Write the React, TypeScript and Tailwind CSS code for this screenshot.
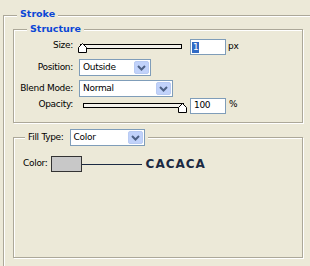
import React from "react";

const Chevron = () => (
  <svg width="9" height="6" viewBox="0 0 9 6">
    <polyline points="1,1 4.5,4.5 8,1" fill="none" stroke="#4D6185" strokeWidth="2" />
  </svg>
);

const Combo = ({ w, text }: { w: string; text: string }) => (
  <div className={`${w} h-[17px] border border-[#7F9DB9] bg-white flex items-center`}>
    <span className="pl-[3px] leading-none">{text}</span>
    <div className="ml-auto mr-[1px] h-[13px] w-[15px] rounded-[2px] border border-[#B9CBF3] bg-[#C1D2FA] flex items-center justify-center">
      <Chevron />
    </div>
  </div>
);

const Thumb = () => (
  <svg width="10" height="10" viewBox="0 0 10 10">
    <path d="M4.5 0.5 L8.5 4.5 L8.5 9.5 L0.5 9.5 L0.5 4.5 Z" fill="#fff" stroke="#000" strokeWidth="1" />
  </svg>
);

export default function App() {
  return (
    <div className="w-[310px] h-[266px] overflow-hidden bg-[#ECE9D8] font-['DejaVu_Sans',sans-serif] text-[9px] tracking-[-0.3px] text-black">
      <div className="pt-[15px] pl-[3px]">
        {/* Outer Stroke group */}
        <div className="relative w-[330px] h-[300px] border border-[#ACA899] shadow-[1px_1px_0_#fff,inset_1px_1px_0_#fff]">
          <div className="absolute left-[13px] top-[-8px] px-[3px] bg-[#ECE9D8] text-[9.5px] leading-[12px] font-bold tracking-normal text-[#0B46D6]">
            Stroke
          </div>

          {/* Structure group */}
          <div className="relative ml-[9px] mt-[13px] w-[290px] h-[94px] border border-[#ACA899] shadow-[1px_1px_0_#fff,inset_1px_1px_0_#fff]">
            <div className="absolute left-[13px] top-[-7px] px-[3px] bg-[#ECE9D8] text-[9.5px] leading-[12px] font-bold tracking-normal text-[#0B46D6]">
              Structure
            </div>

            {/* Size row */}
            <div className="flex items-center h-[16px] mt-[9px]">
              <div className="w-[59px] text-right -mt-[2px]">Size:</div>
              <div className="relative ml-[6px] w-[104px] h-[16px]">
                <div className="ml-[1px] mt-[5px] w-[102px] h-[5px] border border-black bg-[#F3F2EC]" />
                <div className="absolute left-[-1px] top-[4px]">
                  <Thumb />
                </div>
              </div>
              <div className="ml-[7px] w-[36px] h-[16px] border border-[#7F9DB9] bg-white flex items-center pl-[1px]">
                <span className="bg-[#316AC5] text-white px-[1px] leading-[11px]">1</span>
              </div>
              <div className="ml-[2px]">px</div>
            </div>

            {/* Position row */}
            <div className="flex items-center h-[17px] mt-[4px]">
              <div className="w-[59px] text-right">Position:</div>
              <div className="ml-[6px]">
                <Combo w="w-[72px]" text="Outside" />
              </div>
            </div>

            {/* Blend Mode row */}
            <div className="flex items-center h-[17px] mt-[4px]">
              <div className="w-[59px] text-right">Blend Mode:</div>
              <div className="ml-[6px]">
                <Combo w="w-[94px]" text="Normal" />
              </div>
            </div>

            {/* Opacity row */}
            <div className="flex items-center h-[16px] mt-[1px]">
              <div className="w-[59px] text-right -mt-[3px]">Opacity:</div>
              <div className="relative ml-[6px] w-[104px] h-[16px]">
                <div className="ml-[4px] mt-[5px] w-[101px] h-[5px] border border-black bg-[#F3F2EC]" />
                <div className="absolute left-[99px] top-[5px]">
                  <Thumb />
                </div>
              </div>
              <div className="ml-[7px] w-[36px] h-[16px] border border-[#7F9DB9] bg-white flex items-center pl-[3px]">
                100
              </div>
              <div className="ml-[3px] -mt-[2px]">%</div>
            </div>
          </div>

          {/* Fill group */}
          <div className="relative ml-[9px] mt-[14px] w-[290px] h-[121px] border border-[#ACA899] shadow-[1px_1px_0_#fff,inset_1px_1px_0_#fff]">
            <div className="absolute left-[11px] top-[-9px] px-[3px] bg-[#ECE9D8] flex items-center">
              <span>Fill Type:</span>
              <div className="ml-[6px]">
                <Combo w="w-[75px]" text="Color" />
              </div>
            </div>

            <div className="flex items-center pl-[9px] mt-[17px]">
              <span>Color:</span>
              <div className="ml-[3px] w-[31px] h-[16px] border border-[#333] bg-[#C8C8C8]" />
              <div className="w-[60px] h-[1px] bg-[#1B2A43]" />
              <span className="ml-[4px] font-bold text-[12px] tracking-[1px] text-[#1B2A43]">CACACA</span>
            </div>
          </div>
        </div>
      </div>
    </div>
  );
}
